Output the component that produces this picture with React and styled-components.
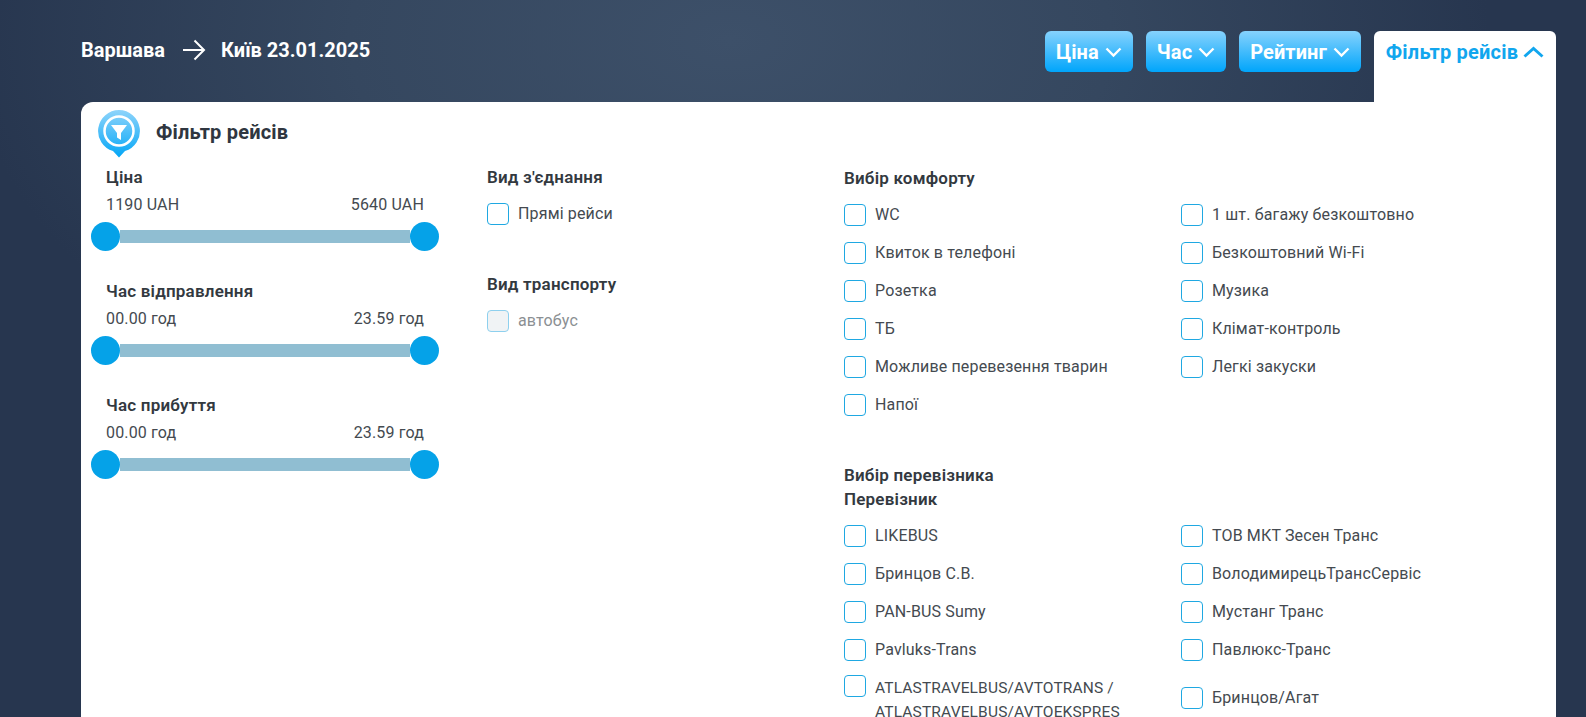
import styled, { createGlobalStyle } from 'styled-components'

const GlobalStyle = createGlobalStyle`
   html, body {
      margin: 0;
      height: 717px;
      overflow: hidden;
   }
   body {
      font-family: "Roboto", "Liberation Sans", sans-serif;
      color: #33393f;
   }
   * {
      box-sizing: border-box;
   }
`
const Page = styled.div`
   height: 717px;
   padding: 0 30px 0 81px;
   overflow: hidden;
   background: radial-gradient(ellipse 760px 440px at 730px 40px, #3d5069 0%, #35475f 50%, #27364f 100%);
   background-color: #27364f;
`
const TopBar = styled.header`
   height: 102px;
   display: flex;
   justify-content: space-between;
   align-items: flex-start;
   padding-top: 31px;
`
const Route = styled.div`
   display: flex;
   align-items: center;
   height: 38px;
   color: #fff;
   font-size: 20px;
   font-weight: 700;
`
const RouteArrow = styled.svg`
   width: 24px;
   height: 22px;
   margin: 0 15px 0 17px;
`
const Sorters = styled.div`
   display: flex;
   gap: 13px;
`
const SortButton = styled.button`
   height: 41px;
   padding: 0 11px;
   display: flex;
   align-items: center;
   gap: 6px;
   border: 0;
   border-radius: 6px;
   background: linear-gradient(#86d2fd, #00a5fb);
   color: #fff;
   font: 700 20px "Roboto", sans-serif;
   letter-spacing: 0.1px;
`
const FilterTab = styled.button`
   height: 71px;
   width: 182px;
   padding: 0 0 30px;
   display: flex;
   align-items: center;
   justify-content: center;
   gap: 5px;
   border: 0;
   border-radius: 6px 6px 0 0;
   background: #fff;
   color: #11a6ee;
   font: 700 20px "Roboto", sans-serif;
   letter-spacing: 0.2px;
`
const Chevron = styled.svg`
   width: ${p => p.$w}px;
   height: 12px;
`
const Panel = styled.main`
   height: 615px;
   background: #fff;
   border-radius: 12px 0 0 0;
   padding: 8px 0 0 10px;
`
const PanelHead = styled.div`
   display: flex;
   align-items: flex-start;
   height: 51px;
   padding-left: 7px;
`
const PinIcon = styled.svg`
   width: 42px;
   height: 48px;
`
const PanelTitle = styled.h2`
   margin: 9px 0 0 16px;
   font-size: 20px;
   line-height: 26px;
   font-weight: 700;
   letter-spacing: 0.2px;
   color: #2f3640;
`
const Columns = styled.div`
   display: grid;
   grid-template-columns: 396px 357px 1fr;
   margin-top: 5px;
`
const SliderBlock = styled.section`
   width: 348px;
   height: 114px;
`
const BlockTitle = styled.h3`
   margin: 0;
   font-size: 17px;
   line-height: 22px;
   font-weight: 600;
   letter-spacing: 0.2px;
   color: #33393f;
`
const SliderTitle = styled(BlockTitle)`
   padding-left: 15px;
`
const RangeValues = styled.div`
   display: flex;
   justify-content: space-between;
   padding: 0 15px;
   margin-top: 6px;
   font-size: 16px;
   line-height: 22px;
   letter-spacing: 0.15px;
   color: #444a50;
`
const SliderRow = styled.div`
   display: flex;
   align-items: center;
   margin-top: 6px;
`
const Thumb = styled.span`
   width: 29px;
   height: 29px;
   flex: none;
   border-radius: 50%;
   background: #05a2e8;
`
const Track = styled.span`
   flex: 1;
   height: 13px;
   background: #90bed2;
`
const MiddleBlock = styled.section`
   height: 107px;
`
const Option = styled.label`
   display: flex;
   align-items: ${p => (p.$top ? 'flex-start' : 'center')};
   gap: 9px;
   padding: ${p => (p.$top ? '6px 0 3px' : '0')};
   font-size: 16px;
   line-height: 24px;
   letter-spacing: 0.15px;
   color: ${p => (p.$disabled ? '#8b8f93' : '#444a50')};
   min-height: 38px;
`
const Box = styled.span`
   width: 22px;
   height: 22px;
   flex: none;
   border-radius: 4px;
   border: 1.5px solid ${p => (p.$disabled ? '#8ed0ee' : '#1fa8e2')};
   background: ${p => (p.$disabled ? '#f0f3f5' : '#fff')};
`
const MiddleOption = styled(Option)`
   margin-top: 7px;
`
const RightTitle = styled(BlockTitle)`
   line-height: 24px;
`
const OptionGrid = styled.div`
   display: grid;
   grid-template-columns: 337px 1fr;
   margin-top: 6px;
   width: 700px;
`
const CarrierHead = styled.div`
   margin-top: 39px;
`
const WideCell = styled.div`
   padding-right: 20px;
`
const LongName = styled.span`
   margin-top: 1px;
   font-size: 15.5px;
`

const Slider = ({ title, from, to }) => (
   <SliderBlock>
      <SliderTitle>{title}</SliderTitle>
      <RangeValues>
         <span>{from}</span>
         <span>{to}</span>
      </RangeValues>
      <SliderRow>
         <Thumb />
         <Track />
         <Thumb />
      </SliderRow>
   </SliderBlock>
)

const Check = ({ label }) => (
   <Option>
      <Box />
      <span>{label}</span>
   </Option>
)

const comfort = [
   'WC', '1 шт. багажу безкоштовно',
   'Квиток в телефоні', 'Безкоштовний Wi-Fi',
   'Розетка', 'Музика',
   'ТБ', 'Клімат-контроль',
   'Можливе перевезення тварин', 'Легкі закуски',
   'Напої',
]
const carriers = [
   'LIKEBUS', 'ТОВ МКТ Зесен Транс',
   'Бринцов С.В.', 'ВолодимирецьТрансСервіс',
   'PAN-BUS Sumy', 'Мустанг Транс',
   'Pavluks-Trans', 'Павлюкс-Транс',
]

export default function App() {
   return (
      <Page>
         <GlobalStyle />
         <TopBar>
            <Route>
               <span>Варшава</span>
               <RouteArrow viewBox="0 0 24 22" fill="none" stroke="#fff" strokeWidth="2">
                  <path d="M1 11h21M12.500 1.500 22 11l-9.500 9.500" />
               </RouteArrow>
               <span>Київ 23.01.2025</span>
            </Route>
            <Sorters>
               {['Ціна', 'Час', 'Рейтинг'].map(name => (
                  <SortButton key={name}>
                     {name}
                     <Chevron $w={17} viewBox="0 0 17 12" fill="none" stroke="#fff" strokeWidth="2.400">
                        <path d="M1.500 2.500 8.500 9.500 15.500 2.500" />
                     </Chevron>
                  </SortButton>
               ))}
               <FilterTab>
                  Фільтр рейсів
                  <Chevron $w={21} viewBox="0 0 21 12" fill="none" stroke="#11a6ee" strokeWidth="3">
                     <path d="M1.500 10.500 10.500 2.500l9 8" />
                  </Chevron>
               </FilterTab>
            </Sorters>
         </TopBar>
         <Panel>
            <PanelHead>
               <PinIcon viewBox="0 0 42 48">
                  <defs>
                     <linearGradient id="pin" x1="0" y1="0" x2="0" y2="1">
                        <stop offset="0" stopColor="#8ed4fb" />
                        <stop offset="1" stopColor="#03a6f6" />
                     </linearGradient>
                  </defs>
                  <path d="M21 0a21 21 0 0 1 6 41.100L21 47.500l-6-6.400A21 21 0 0 1 21 0z" fill="url(#pin)" />
                  <circle cx="21" cy="21" r="14.500" fill="none" stroke="#fff" strokeWidth="2.500" />
                  <path d="M13 15h16l-6 8v7l-4-2.500V23z" fill="#fff" />
               </PinIcon>
               <PanelTitle>Фільтр рейсів</PanelTitle>
            </PanelHead>
            <Columns>
               <div>
                  <Slider title="Ціна" from="1190 UAH" to="5640 UAH" />
                  <Slider title="Час відправлення" from="00.00 год" to="23.59 год" />
                  <Slider title="Час прибуття" from="00.00 год" to="23.59 год" />
               </div>
               <div>
                  <MiddleBlock>
                     <BlockTitle>Вид з'єднання</BlockTitle>
                     <MiddleOption>
                        <Box />
                        <span>Прямі рейси</span>
                     </MiddleOption>
                  </MiddleBlock>
                  <MiddleBlock>
                     <BlockTitle>Вид транспорту</BlockTitle>
                     <MiddleOption $disabled>
                        <Box $disabled />
                        <span>автобус</span>
                     </MiddleOption>
                  </MiddleBlock>
               </div>
               <div>
                  <RightTitle>Вибір комфорту</RightTitle>
                  <OptionGrid>
                     {comfort.map(label => <Check key={label} label={label} />)}
                  </OptionGrid>
                  <CarrierHead>
                     <RightTitle>Вибір перевізника</RightTitle>
                     <RightTitle>Перевізник</RightTitle>
                  </CarrierHead>
                  <OptionGrid>
                     {carriers.map(label => <Check key={label} label={label} />)}
                     <WideCell>
                        <Option $top>
                           <Box />
                           <LongName>ATLASTRAVELBUS/AVTOTRANS /<br />ATLASTRAVELBUS/AVTOEKSPRES</LongName>
                        </Option>
                     </WideCell>
                     <Check label="Бринцов/Агат" />
                  </OptionGrid>
               </div>
            </Columns>
         </Panel>
      </Page>
   )
}
